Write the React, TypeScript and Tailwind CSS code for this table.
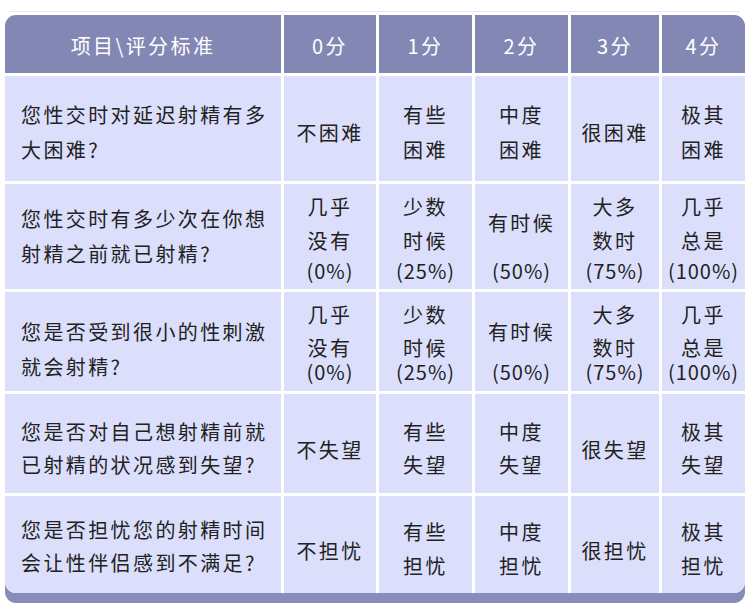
type Line = { t: string; h: string }
type Cell = { pt: string; lines: Line[] }

const header = ["项目\\评分标准", "0分", "1分", "2分", "3分", "4分"]

const two = (pt: string, h: string, a: string, b: string): Cell => ({
  pt,
  lines: [
    { t: a, h },
    { t: b, h: "h-[30px]" },
  ],
})
const one = (pt: string, a: string): Cell => ({ pt, lines: [{ t: a, h: "h-[30px]" }] })

const freq2: Cell[] = [
  { pt: "pt-[8px]", lines: [{ t: "几乎", h: "h-[34px]" }, { t: "没有", h: "h-[30px]" }, { t: "(0%)", h: "h-[30px]" }] },
  { pt: "pt-[8px]", lines: [{ t: "少数", h: "h-[34px]" }, { t: "时候", h: "h-[30px]" }, { t: "(25%)", h: "h-[30px]" }] },
  { pt: "pt-[24px]", lines: [{ t: "有时候", h: "h-[48px]" }, { t: "(50%)", h: "h-[30px]" }] },
  { pt: "pt-[8px]", lines: [{ t: "大多", h: "h-[34px]" }, { t: "数时", h: "h-[30px]" }, { t: "(75%)", h: "h-[30px]" }] },
  { pt: "pt-[8px]", lines: [{ t: "几乎", h: "h-[34px]" }, { t: "总是", h: "h-[30px]" }, { t: "(100%)", h: "h-[30px]" }] },
]

const freq3: Cell[] = [
  { pt: "pt-[8px]", lines: [{ t: "几乎", h: "h-[33px]" }, { t: "没有", h: "h-[24px]" }, { t: "(0%)", h: "h-[30px]" }] },
  { pt: "pt-[8px]", lines: [{ t: "少数", h: "h-[33px]" }, { t: "时候", h: "h-[24px]" }, { t: "(25%)", h: "h-[30px]" }] },
  { pt: "pt-[25px]", lines: [{ t: "有时候", h: "h-[40px]" }, { t: "(50%)", h: "h-[30px]" }] },
  { pt: "pt-[8px]", lines: [{ t: "大多", h: "h-[33px]" }, { t: "数时", h: "h-[24px]" }, { t: "(75%)", h: "h-[30px]" }] },
  { pt: "pt-[8px]", lines: [{ t: "几乎", h: "h-[33px]" }, { t: "总是", h: "h-[24px]" }, { t: "(100%)", h: "h-[30px]" }] },
]

const rows: { q: Cell; answers: Cell[] }[] = [
  {
    q: two("pt-[24px]", "h-[35px]", "您性交时对延迟射精有多", "大困难?"),
    answers: [
      one("pt-[42px]", "不困难"),
      two("pt-[24px]", "h-[35px]", "有些", "困难"),
      two("pt-[24px]", "h-[35px]", "中度", "困难"),
      one("pt-[42px]", "很困难"),
      two("pt-[24px]", "h-[35px]", "极其", "困难"),
    ],
  },
  {
    q: two("pt-[20px]", "h-[35px]", "您性交时有多少次在你想", "射精之前就已射精?"),
    answers: freq2,
  },
  {
    q: two("pt-[25px]", "h-[35px]", "您是否受到很小的性刺激", "就会射精?"),
    answers: freq3,
  },
  {
    q: two("pt-[23px]", "h-[33px]", "您是否对自己想射精前就", "已射精的状况感到失望?"),
    answers: [
      one("pt-[41px]", "不失望"),
      two("pt-[23px]", "h-[33px]", "有些", "失望"),
      two("pt-[23px]", "h-[33px]", "中度", "失望"),
      one("pt-[41px]", "很失望"),
      two("pt-[23px]", "h-[33px]", "极其", "失望"),
    ],
  },
  {
    q: two("pt-[19px]", "h-[33px]", "您是否担忧您的射精时间", "会让性伴侣感到不满足?"),
    answers: [
      one("pt-[40px]", "不担忧"),
      two("pt-[21px]", "h-[34px]", "有些", "担忧"),
      two("pt-[21px]", "h-[34px]", "中度", "担忧"),
      one("pt-[40px]", "很担忧"),
      two("pt-[21px]", "h-[34px]", "极其", "担忧"),
    ],
  },
]

function TableCell({ cell, left }: { cell: Cell; left?: boolean }) {
  return (
    <div className={`bg-[#dcdffb] ${cell.pt} ${left ? "pl-[16px] items-start" : "items-center"} flex flex-col`}>
      {cell.lines.map((l, i) => (
        <div
          key={i}
          className={`${l.h} leading-[30px] whitespace-nowrap ${l.t.startsWith("(") ? "tracking-[1px]" : ""}`}
        >
          {l.t}
        </div>
      ))}
    </div>
  )
}

export default function App() {
  return (
    <div className="w-[750px] h-[615px] bg-white pt-[11px] px-[5px] font-['Noto_Sans_CJK_SC','Noto_Sans',sans-serif] text-[20px] tracking-[2.4px] text-[#222]">
      <div className="mx-[5px] h-px bg-[#e6e8f6] mb-[3px]" />
      <div className="grid grid-cols-[276px_92px_93px_93px_88px_83px] grid-rows-[58px_105px_105px_99px_99px_97px] gap-[3px] bg-white rounded-[11px] overflow-hidden shadow-[0_10px_0_#878db8]">
        {header.map((h) => (
          <div key={h} className="bg-[#8288b3] text-white flex items-center justify-center pt-[4px]">
            {h}
          </div>
        ))}
        {rows.map((r, i) => (
          <div key={i} className="contents">
            <TableCell cell={r.q} left />
            {r.answers.map((a, j) => (
              <TableCell key={j} cell={a} />
            ))}
          </div>
        ))}
      </div>
    </div>
  )
}
